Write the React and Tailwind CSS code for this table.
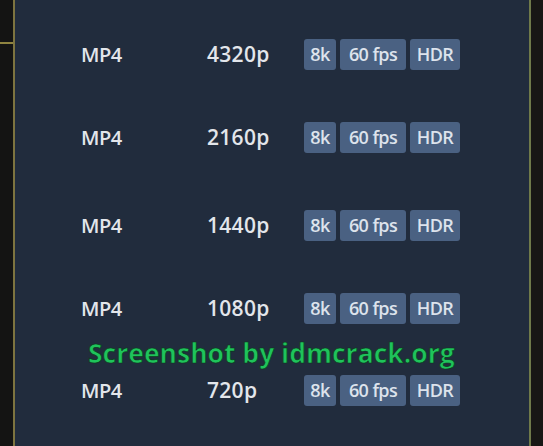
import React from 'react'

const rows = [
  { res: '4320p', mt: 'mt-[39px]' },
  { res: '2160p', mt: 'mt-[52px]' },
  { res: '1440p', mt: 'mt-[57px]' },
  { res: '1080p', mt: 'mt-[52px]' },
  { res: '720p', mt: 'mt-[51px]' },
]

const Badge = ({ children, w }) => (
  <span
    className={`flex h-[31px] items-center justify-center rounded-[3px] bg-[#4a6182] text-[18px] font-semibold text-[#dde3ec] ${w}`}
  >
    {children}
  </span>
)

const App = () => {
  return (
    <div
      className="flex h-[446px] w-[543px] overflow-hidden bg-[#141413]"
      style={{ fontFamily: '"Open Sans", "Liberation Sans", sans-serif' }}
    >
      {/* left strip */}
      <div className="flex w-[13px] flex-col">
        <div className="h-[42px]" />
        <div className="h-[2px] bg-[#8f8440]" />
      </div>
      <div className="w-[2px] bg-[#7d7440]" />

      {/* panel */}
      <div className="relative flex w-[514px] flex-col bg-[#212c3d]">
        {rows.map((r) => (
          <div key={r.res} className={`flex h-[31px] items-center ${r.mt}`}>
            <span className="ml-[66px] w-[126px] text-[20px] font-semibold tracking-[-0.5px] text-[#e3e6eb]">
              MP4
            </span>
            <span className="w-[97px] text-[21px] font-semibold tracking-[0.3px] text-[#e3e6eb]">
              {r.res}
            </span>
            <div className="flex gap-[4px] tracking-[-0.6px]">
              <Badge w="w-[32px]">8k</Badge>
              <Badge w="w-[66px]">60 fps</Badge>
              <Badge w="w-[50px]">HDR</Badge>
            </div>
          </div>
        ))}

        {/* watermark */}
        <div
          className="absolute left-[73px] top-[334px] text-[26.5px] font-bold text-[#1fc35b]"
          style={{ WebkitTextStroke: '0.7px #0b3a1c' }}
        >
          Screenshot by idmcrack.org
        </div>
      </div>

      <div className="w-[2px] bg-[#6f7a4a]" />
      <div className="flex-1 bg-[#181715]" />
    </div>
  )
}

export default App
